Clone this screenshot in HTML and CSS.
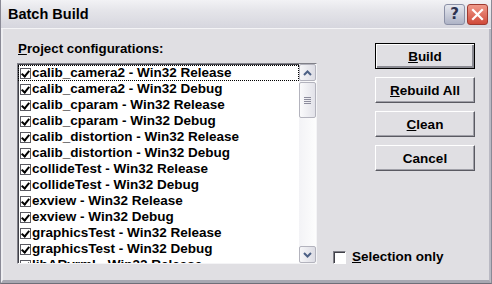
FILE: index.html
```html
<!DOCTYPE html>
<html>
<head>
<meta charset="utf-8">
<link rel="stylesheet" href="styles.css">
</head>
<body>
<div class="window">
  <div class="titlebar">
    <span class="title">Batch Build</span>
    <div class="tbtns">
      <div class="tb help">?</div>
      <div class="tb close"><svg width="13" height="13" viewBox="0 0 13 13"><path d="M2 2 L11 11 M11 2 L2 11" stroke="#fff" stroke-width="2.2" stroke-linecap="square"/></svg></div>
    </div>
  </div>
  <div class="body">
    <div class="left">
      <div class="label"><u>P</u>roject configurations:</div>
      <div class="listbox">
        <div class="items">
          <div class="row focus"><span class="cb"></span><span class="txt">calib_camera2 - Win32 Release</span></div>
          <div class="row"><span class="cb"></span><span class="txt">calib_camera2 - Win32 Debug</span></div>
          <div class="row"><span class="cb"></span><span class="txt">calib_cparam - Win32 Release</span></div>
          <div class="row"><span class="cb"></span><span class="txt">calib_cparam - Win32 Debug</span></div>
          <div class="row"><span class="cb"></span><span class="txt">calib_distortion - Win32 Release</span></div>
          <div class="row"><span class="cb"></span><span class="txt">calib_distortion - Win32 Debug</span></div>
          <div class="row"><span class="cb"></span><span class="txt">collideTest - Win32 Release</span></div>
          <div class="row"><span class="cb"></span><span class="txt">collideTest - Win32 Debug</span></div>
          <div class="row"><span class="cb"></span><span class="txt">exview - Win32 Release</span></div>
          <div class="row"><span class="cb"></span><span class="txt">exview - Win32 Debug</span></div>
          <div class="row"><span class="cb"></span><span class="txt">graphicsTest - Win32 Release</span></div>
          <div class="row"><span class="cb"></span><span class="txt">graphicsTest - Win32 Debug</span></div>
          <div class="row"><span class="cb"></span><span class="txt">libARvrml - Win32 Release</span></div>
        </div>
        <div class="scrollbar">
          <div class="sbtn"><svg width="9" height="6" viewBox="0 0 9 6"><path d="M1 5 L4.5 1.5 L8 5" fill="none" stroke="#4d6185" stroke-width="2"/></svg></div>
          <div class="thumb"><span></span><span></span><span></span><span></span></div>
          <div class="track"></div>
          <div class="sbtn"><svg width="9" height="6" viewBox="0 0 9 6"><path d="M1 1 L4.5 4.5 L8 1" fill="none" stroke="#4d6185" stroke-width="2"/></svg></div>
        </div>
      </div>
    </div>
    <div class="right">
      <div class="buttons">
        <button class="btn default"><u>B</u>uild</button>
        <button class="btn"><u>R</u>ebuild All</button>
        <button class="btn"><u>C</u>lean</button>
        <button class="btn">Cancel</button>
      </div>
      <label class="selonly"><span class="cbox"></span><span><u>S</u>election only</span></label>
    </div>
  </div>
</div>
</body>
</html>
```
FILE: styles.css
```css
html, body {
  margin: 0;
  padding: 0;
  background: #e0dfe3;
}
.window {
  width: 492px;
  height: 284px;
  box-sizing: border-box;
  background: #e0dfe3;
  border-left: 1px solid #8a8a96;
  border-right: 1px solid #8a8a96;
  border-bottom: 1px solid #6e6e78;
  display: flex;
  flex-direction: column;
  font-family: "Liberation Sans", Arial, sans-serif;
  font-weight: bold;
  font-size: 13.5px;
  color: #000;
}
.titlebar {
  height: 29px;
  box-sizing: border-box;
  background: linear-gradient(#f2f2f5 0%, #e4e4e9 40%, #d6d6de 100%);
  border-bottom: 1px solid #f4f4f6;
  display: flex;
  align-items: center;
  justify-content: space-between;
  padding: 0 3px 0 7px;
}
.title {
  font-size: 14.5px;
  font-weight: bold;
}
.tbtns {
  display: flex;
  gap: 2px;
}
.tb {
  width: 21px;
  height: 21px;
  box-sizing: border-box;
  border-radius: 3px;
  display: flex;
  align-items: center;
  justify-content: center;
}
.help {
  background: linear-gradient(#e6e8ef, #aeb3c6);
  border: 1px solid #8b90a6;
  color: #2e3350;
  font-size: 15px;
  font-family: "DejaVu Sans", sans-serif;
}
.close {
  background: linear-gradient(#f09a8a, #d04a3a);
  border: 1px solid #9e3a30;
}
.body {
  flex: 1;
  display: flex;
  padding: 12px 14px 0 14px;
  border-left: 2px solid #eeeef1;
  border-right: 2px solid #b9b9c3;
  border-bottom: 3px solid #a8a8b2;
}
.left {
  display: flex;
  flex-direction: column;
}
.label {
  height: 16px;
  line-height: 16px;
  margin-bottom: 6px;
  padding-left: 1px;
  font-size: 13.3px;
}
.listbox {
  width: 300px;
  height: 201px;
  box-sizing: border-box;
  border: 1px solid;
  border-color: #808088 #f4f4f6 #f4f4f6 #808088;
  box-shadow: inset 1px 1px 0 #404048;
  background: #fff;
  display: flex;
  overflow: hidden;
}
.items {
  flex: 1;
  padding-top: 1px;
  overflow: hidden;
}
.row {
  height: 16px;
  display: flex;
  align-items: center;
  white-space: nowrap;
  padding-left: 2px;
  box-sizing: border-box;
}
.row.focus {
  outline: 1px dotted #000;
  outline-offset: -1px;
}
.cb {
  width: 11px;
  height: 11px;
  box-sizing: border-box;
  border: 1px solid #5a5a62;
  margin-right: 1px;
  flex: none;
  position: relative;
  background: #fff;
}
.cb::after {
  content: "";
  position: absolute;
  left: 2px;
  top: 0px;
  width: 3px;
  height: 6px;
  border-right: 2px solid #000;
  border-bottom: 2px solid #000;
  transform: rotate(40deg);
}
.txt {
  font-size: 13.5px;
  line-height: 16px;
}
.scrollbar {
  width: 17px;
  flex: none;
  display: flex;
  flex-direction: column;
  background: linear-gradient(90deg, #f3f3f6, #fdfdfd);
}
.sbtn {
  height: 17px;
  box-sizing: border-box;
  border: 1px solid #b3b3bd;
  border-radius: 2px;
  background: linear-gradient(90deg, #f6f6f8, #dcdce4);
  display: flex;
  align-items: center;
  justify-content: center;
}
.thumb {
  height: 36px;
  margin-top: 1px;
  box-sizing: border-box;
  border: 1px solid #b3b3bd;
  border-radius: 2px;
  background: linear-gradient(90deg, #fafafb, #e2e2e9);
  display: flex;
  flex-direction: column;
  align-items: center;
  justify-content: center;
  gap: 1px;
}
.thumb span {
  width: 7px;
  height: 1px;
  background: #8c8c9c;
}
.track {
  flex: 1;
}
.right {
  flex: 1;
  display: flex;
  flex-direction: column;
  padding-left: 16px;
}
.buttons {
  display: flex;
  flex-direction: column;
  gap: 8px;
  padding-left: 42px;
  padding-top: 2px;
}
.btn {
  width: 100px;
  height: 26px;
  box-sizing: border-box;
  font-family: "Liberation Sans", Arial, sans-serif;
  font-weight: bold;
  font-size: 13.5px;
  color: #000;
  background: #e0dfe3;
  border: 1px solid;
  border-color: #fff #5a5a62 #5a5a62 #fff;
  box-shadow: inset -1px -1px 0 #a0a0a8;
  padding: 0;
}
.btn.default {
  border: 1px solid #000;
  box-shadow: inset 1px 1px 0 #fff, inset -2px -2px 0 #8a8a92;
}
.selonly {
  margin-top: auto;
  margin-bottom: 15px;
  display: flex;
  align-items: center;
  gap: 6px;
  font-size: 13.5px;
  line-height: 16px;
}
.cbox {
  width: 13px;
  height: 13px;
  box-sizing: border-box;
  background: #fff;
  border: 1px solid;
  border-color: #808088 #fff #fff #808088;
  box-shadow: inset 1px 1px 0 #404048;
}
```
